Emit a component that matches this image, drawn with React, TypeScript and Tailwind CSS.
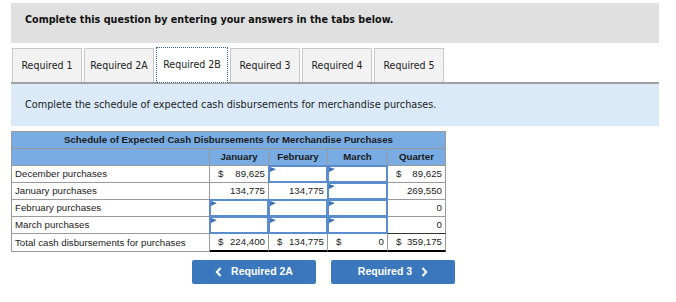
import React from "react";

const TAHOMA = { fontFamily: '"DejaVu Sans Condensed", "DejaVu Sans", sans-serif' };
const ARIAL = { fontFamily: '"Liberation Sans", Arial, sans-serif' };

function Flag() {
  return (
    <svg className="absolute left-0 top-0" width="6" height="6" viewBox="0 0 6 6">
      <polygon points="0,0 6,2 0,5" fill="#3b72b8" />
    </svg>
  );
}

function InputCell({ last }: { last?: boolean }) {
  return (
    <div className={`relative border-r border-b ${last ? "border-b-[#333]" : "border-b-[#9a9a9a]"} border-r-[#9a9a9a] p-0`}>
      <div className="absolute inset-[-1px] border-2 border-[#5b8ccb] bg-white">
        <Flag />
      </div>
    </div>
  );
}

function Amt({ dollar, value, cls = "" }: { dollar?: boolean; value: string; cls?: string }) {
  return (
    <div className={`flex items-center justify-between border-r border-b border-[#9a9a9a] pl-[8px] pr-[3px] text-[#222] ${cls}`}>
      <span>{dollar ? "$" : ""}</span>
      <span>{value}</span>
    </div>
  );
}

function Label({ text, cls = "" }: { text: string; cls?: string }) {
  return (
    <div className={`flex items-center border-r border-b border-[#9a9a9a] pl-[3px] text-[#222] ${cls}`}>{text}</div>
  );
}

function Tab({ label, active }: { label: string; active?: boolean }) {
  if (active) {
    return (
      <div className="relative z-10 mb-[-1px] flex h-[36px] w-[72px] items-center justify-center border border-dotted border-[#2f5f9e] bg-white text-[10.5px] text-[#222]">
        {label}
      </div>
    );
  }
  return (
    <div className="flex h-[34px] w-[70px] items-center justify-center border border-b-0 border-[#c8c8c8] bg-[#f2f2f2] text-[10.5px] text-[#222]">
      {label}
    </div>
  );
}

export default function App() {
  return (
    <div className="relative h-[302px] w-[676px] overflow-hidden bg-white">
      <div className="ml-[11px] w-[648px] pt-[3px]" style={TAHOMA}>
        <div className="h-[40px] bg-[#e0e0e0] pl-[14px] pt-[10px] text-[10.7px] font-bold leading-[14px] text-[#111]">
          Complete this question by entering your answers in the tabs below.
        </div>
        <div className="mt-[5px] flex h-[36px] items-end gap-[2px] border-b-2 border-[#a0a0a0] pl-[1px]">
          <Tab label="Required 1" />
          <Tab label="Required 2A" />
          <Tab label="Required 2B" active />
          <Tab label="Required 3" />
          <Tab label="Required 4" />
          <Tab label="Required 5" />
        </div>
        <div className="flex h-[42px] items-center bg-[#daeaf8] pl-[14px] text-[10.8px] text-[#222]">
          Complete the schedule of expected cash disbursements for merchandise purchases.
        </div>
      </div>

      <div
        className="ml-[11px] mt-[5px] grid w-[435px] grid-cols-[198px_59px_59px_60px_58px] grid-rows-[17px_17px_17px_17px_17px_17px_18px] border-l border-t border-[#9a9a9a] text-[9.7px] leading-none"
        style={ARIAL}
      >
        <div className="col-span-5 flex items-center justify-center border-r border-b border-[#9a9a9a] bg-[#78ace3] font-bold text-[#1b1b1b]">
          Schedule of Expected Cash Disbursements for Merchandise Purchases
        </div>
        <div className="border-r border-b border-[#9a9a9a] bg-[#78ace3]" />
        <div className="flex items-center justify-center border-r border-b border-[#9a9a9a] bg-[#78ace3] font-bold text-[#1b1b1b]">January</div>
        <div className="flex items-center justify-center border-r border-b border-[#9a9a9a] bg-[#78ace3] font-bold text-[#1b1b1b]">February</div>
        <div className="flex items-center justify-center border-r border-b border-[#9a9a9a] bg-[#78ace3] font-bold text-[#1b1b1b]">March</div>
        <div className="flex items-center justify-center border-r border-b border-[#9a9a9a] bg-[#78ace3] font-bold text-[#1b1b1b]">Quarter</div>

        <Label text="December purchases" />
        <Amt dollar value="89,625" />
        <InputCell />
        <InputCell />
        <Amt dollar value="89,625" />

        <Label text="January purchases" />
        <Amt value="134,775" />
        <Amt value="134,775" />
        <InputCell />
        <Amt value="269,550" />

        <Label text="February purchases" />
        <InputCell />
        <InputCell />
        <InputCell />
        <Amt value="0" />

        <Label text="March purchases" />
        <InputCell last />
        <InputCell last />
        <InputCell last />
        <Amt value="0" cls="border-b-[#333]" />

        <Label text="Total cash disbursements for purchases" />
        <Amt dollar value="224,400" cls="border-b-2 border-b-black" />
        <Amt dollar value="134,775" cls="border-b-2 border-b-black" />
        <Amt dollar value="0" cls="border-b-2 border-b-black" />
        <Amt dollar value="359,175" cls="border-b-2 border-b-black" />
      </div>

      <div className="ml-[192px] mt-[8px] flex gap-[15px]" style={ARIAL}>
        <button className="flex h-[24px] w-[124px] items-center justify-center gap-[9px] rounded-[2px] bg-[#3a77bd] text-[10.5px] font-bold text-white">
          <svg width="7" height="10" viewBox="0 0 7 10">
            <path d="M5.5 1 L1.8 5 L5.5 9" fill="none" stroke="white" strokeWidth="2" />
          </svg>
          <span>Required 2A</span>
        </button>
        <button className="flex h-[24px] w-[124px] items-center justify-center gap-[9px] rounded-[2px] bg-[#3a77bd] text-[10.5px] font-bold text-white">
          <span>Required 3</span>
          <svg width="7" height="10" viewBox="0 0 7 10">
            <path d="M1.5 1 L5.2 5 L1.5 9" fill="none" stroke="white" strokeWidth="2" />
          </svg>
        </button>
      </div>
    </div>
  );
}
